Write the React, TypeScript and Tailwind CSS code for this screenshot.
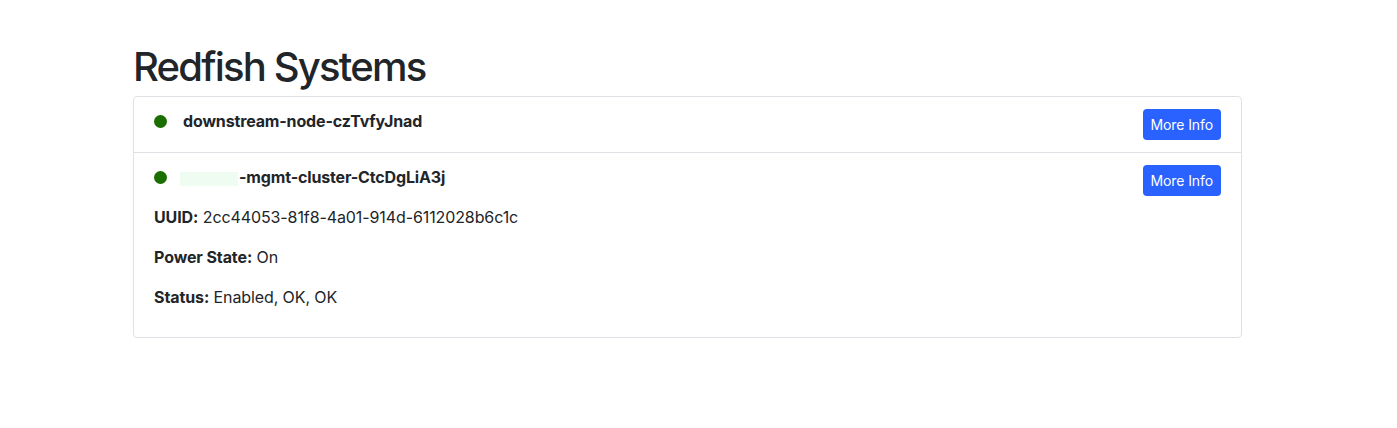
interface SystemInfo {
  id: string;
  name: string;
  redacted?: boolean;
  uuid?: string;
  powerState?: string;
  status?: string;
}

const systems: SystemInfo[] = [
  { id: 'a', name: 'downstream-node-czTvfyJnad' },
  {
    id: 'b',
    name: '-mgmt-cluster-CtcDgLiA3j',
    redacted: true,
    uuid: '2cc44053-81f8-4a01-914d-6112028b6c1c',
    powerState: 'On',
    status: 'Enabled, OK, OK',
  },
];

function SystemRow({ system, first }: { system: SystemInfo; first: boolean }) {
  const expanded = !!system.uuid;

  return (
    <div className={`px-5 py-3 ${first ? '' : 'border-t border-[#dee2e6]'}`}>
      {/* header: name + button (button overhangs when details are shown) */}
      <div className={`flex items-start justify-between ${expanded ? 'h-6' : ''}`}>
        <div className="flex items-center h-6">
          <span className="w-[13px] h-[13px] rounded-full bg-[#1b6e00] mr-4" />
          <span className="text-base font-bold leading-6 tracking-[-0.15px] text-[#212529]">
            {system.redacted && (
              <span className="inline-block w-[58px] h-[14px] bg-[#effcf1] align-middle -ml-[3px] mr-[1px]" />
            )}
            {system.name}
          </span>
        </div>
        <button className="h-[31px] px-[8px] rounded-[4px] bg-[#2962ff] text-white text-sm leading-none tracking-[-0.1px]">
          More Info
        </button>
      </div>
      {expanded && (
        <div className="text-base leading-6 text-[#212529] tracking-[-0.1px]">
          <p className="mt-4">
            <b>UUID:</b> {system.uuid}
          </p>
          <p className="mt-4">
            <b>Power State:</b> {system.powerState}
          </p>
          <p className="mt-4 mb-4">
            <b>Status:</b> {system.status}
          </p>
        </div>
      )}
    </div>
  );
}

export default function App() {
  return (
    <div className="min-h-screen bg-white font-['Inter','Liberation_Sans',sans-serif] text-[#212529]">
      <div className="ml-[133px] w-[1109px] pt-[43px]">
        <h1 className="text-[40px] leading-[48px] font-medium mb-[5px] tracking-[-1.8px]">Redfish Systems</h1>
        <div className="border border-[#dee2e6] rounded-[4px]">
          {systems.map((s, i) => (
            <SystemRow key={s.id} system={s} first={i === 0} />
          ))}
        </div>
      </div>
    </div>
  );
}
